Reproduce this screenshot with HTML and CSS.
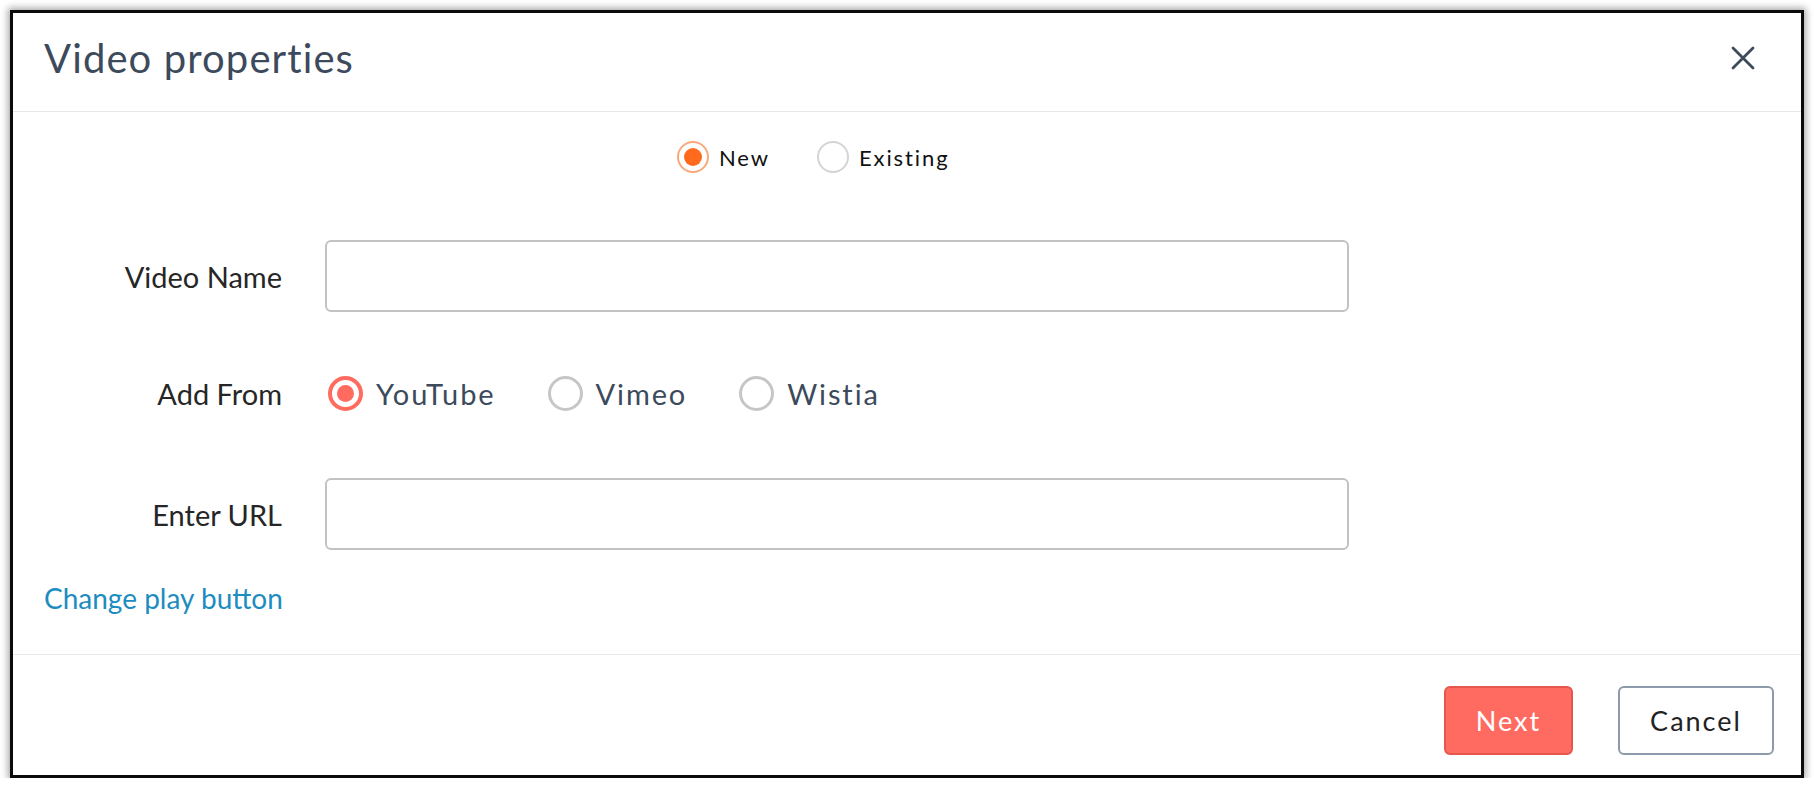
FILE: index.html
```html
<!DOCTYPE html>
<html>
<head>
<meta charset="utf-8">
<link rel="stylesheet" href="styles.css">
</head>
<body>
<div class="dialog">
  <div class="header">
    <h1 class="title">Video properties</h1>
    <button class="close" aria-label="Close">
      <svg width="24" height="24" viewBox="0 0 24 24"><path d="M2 2 L22 22 M22 2 L2 22" stroke="#3d4a5c" stroke-width="2.8" stroke-linecap="round" fill="none"/></svg>
    </button>
  </div>
  <div class="body">
    <div class="mode-row">
      <label class="mode-opt"><span class="mradio checked"></span><span>New</span></label>
      <label class="mode-opt"><span class="mradio"></span><span>Existing</span></label>
    </div>
    <div class="form-row row-name">
      <div class="label">Video Name</div>
      <div class="input"></div>
    </div>
    <div class="form-row row-from">
      <div class="label">Add From</div>
      <div class="options">
        <label class="opt"><span class="radio checked"></span><span>YouTube</span></label>
        <label class="opt"><span class="radio"></span><span>Vimeo</span></label>
        <label class="opt"><span class="radio"></span><span>Wistia</span></label>
      </div>
    </div>
    <div class="form-row row-url">
      <div class="label">Enter URL</div>
      <div class="input"></div>
    </div>
    <a class="link">Change play button</a>
  </div>
  <div class="footer">
    <button class="btn btn-next">Next</button>
    <button class="btn btn-cancel">Cancel</button>
  </div>
</div>
</body>
</html>
```
FILE: styles.css
```css
html, body {
  margin: 0;
  padding: 0;
  background: #ffffff;
}
body {
  font-family: Lato, "Liberation Sans", sans-serif;
}
.dialog {
  box-sizing: border-box;
  margin: 10px 10px 0 10px;
  width: 1794px;
  height: 768px;
  border: 3px solid #0b0b0b;
  background: #fff;
  box-shadow: 0 0 7px 2px rgba(0,0,0,0.35);
  display: flex;
  flex-direction: column;
}
.header {
  box-sizing: border-box;
  height: 99px;
  border-bottom: 1px solid #e8e8e8;
  display: flex;
  justify-content: space-between;
  align-items: flex-start;
  padding: 21px 46px 0 31px;
}
.title {
  margin: 0;
  font-size: 40px;
  line-height: 48px;
  font-weight: normal;
  letter-spacing: 1.1px;
  color: #3d4a5c;
}
.close {
  border: 0;
  background: none;
  padding: 0;
  margin-top: 12px;
  width: 24px;
  height: 24px;
  display: block;
}
.close svg { display: block; }
.body {
  box-sizing: border-box;
  height: 542px;
  padding: 27px 0 0 31px;
}
.mode-row {
  display: flex;
  align-items: center;
  height: 36px;
  padding-left: 633px;
  gap: 47px;
  font-size: 22px;
  letter-spacing: 1.9px;
  color: #111;
}
.mode-opt {
  display: flex;
  align-items: center;
  gap: 10px;
}
.mradio {
  box-sizing: border-box;
  width: 32px;
  height: 32px;
  border-radius: 50%;
  border: 2px solid #d4d4d4;
  display: inline-block;
  position: relative;
}
.mradio.checked {
  border-color: #f7a97a;
}
.mradio.checked::after {
  content: "";
  position: absolute;
  left: 5px; top: 5px;
  width: 18px; height: 18px;
  border-radius: 50%;
  background: #ff6a1c;
}
.form-row {
  display: flex;
  align-items: center;
}
.row-name { margin-top: 65px; }
.row-from { margin-top: 45px; height: 72px; }
.row-url { margin-top: 49px; }
.label {
  width: 238px;
  margin-right: 43px;
  text-align: right;
  font-size: 29px;
  color: #262626;
}
.input {
  box-sizing: border-box;
  width: 1024px;
  height: 72px;
  border: 2px solid #c2c2c2;
  border-radius: 6px;
}
.options {
  display: flex;
  align-items: center;
  gap: 52px;
  margin-left: 3px;
  font-size: 29px;
  letter-spacing: 1.9px;
  color: #3c4a5c;
}
.opt {
  display: flex;
  align-items: center;
  gap: 13px;
}
.radio {
  box-sizing: border-box;
  width: 35px;
  height: 35px;
  border-radius: 50%;
  border: 3px solid #c6c6c6;
  display: inline-block;
  position: relative;
}
.radio.checked {
  border: 4px solid #ff6b5e;
}
.radio.checked::after {
  content: "";
  position: absolute;
  left: 5px; top: 5px;
  width: 17px; height: 17px;
  border-radius: 50%;
  background: #ff6b5e;
}
.link {
  display: block;
  margin-top: 30px;
  font-size: 28px;
  line-height: 36px;
  color: #1d8cc0;
}
.footer {
  box-sizing: border-box;
  height: 121px;
  border-top: 1px solid #e8e8e8;
  display: flex;
  justify-content: flex-end;
  align-items: flex-start;
  gap: 45px;
  padding: 31px 27px 0 0;
}
.btn {
  box-sizing: border-box;
  height: 69px;
  border-radius: 6px;
  font-family: Lato, "Liberation Sans", sans-serif;
  font-size: 27px;
  letter-spacing: 2px;
  padding: 0;
}
.btn-next {
  width: 129px;
  background: #ff6b61;
  border: 2px solid #e5564c;
  color: #fff;
}
.btn-cancel {
  width: 156px;
  background: #fff;
  border: 2px solid #8d9aab;
  color: #222;
}
```
